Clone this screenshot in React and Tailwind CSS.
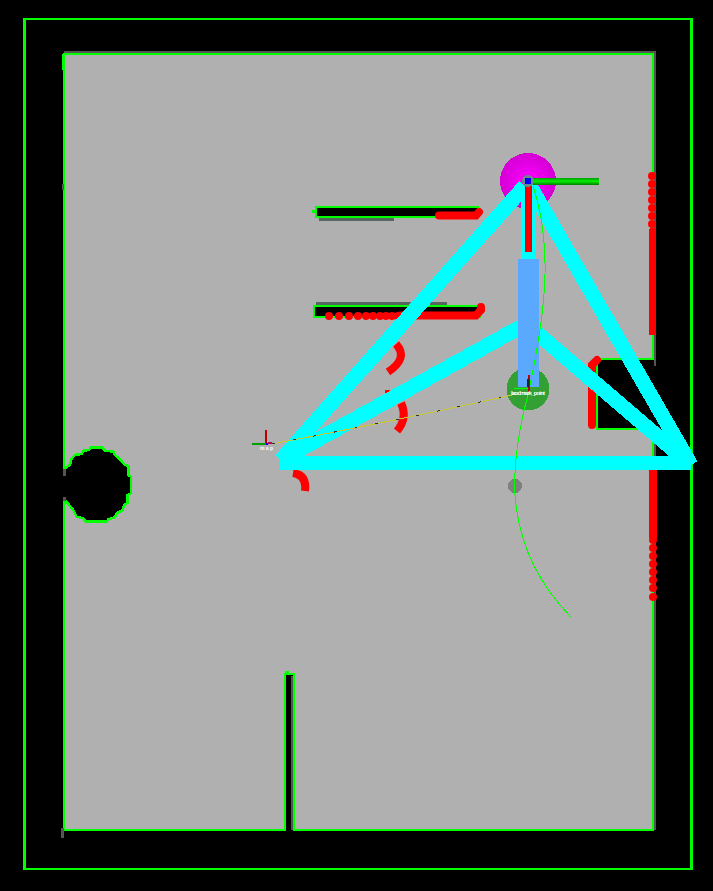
const CIRCLE = [[45,115],[60,105],[65,85],[75,75],[95,72],[100,62],[118,60],[122,53],[158,53],[165,62],[190,65],[195,75],[212,90],[222,103],[235,108],[235,135],[243,140],[243,190],[233,195],[233,218],[222,225],[218,240],[200,250],[195,262],[175,268],[170,275],[108,275],[100,265],[80,260],[70,240],[60,228],[50,215],[42,212]]
  .map(([x, y]) => `${50 + x / 3} ${430 + y / 3}`);

const ROOM = `M64 468 V54 H653 V359 H597 V429 H653 V830 H294 V674 H285 V830 H64 V500 L${CIRCLE.slice().reverse().join(' L')} Z`;

const SLOT_DOTS = [329, 339, 349, 358, 366, 373, 380, 386, 392, 398];
const RIGHT_DOTS_TOP = [176, 184, 192, 200, 208, 216, 224];
const RIGHT_DOTS_BOTTOM = [540, 548, 556, 564, 572, 580, 588, 597];

export default function App() {
  return (
    <div className="w-[713px] h-[891px] bg-black">
      <svg width="713" height="891" viewBox="0 0 713 891" shapeRendering="crispEdges" className="block">
        <defs>
          <radialGradient id="magenta" cx="50%" cy="50%" r="50%">
            <stop offset="0%" stopColor="#ff00ff" />
            <stop offset="100%" stopColor="#d400d4" />
          </radialGradient>
          <linearGradient id="greenBar" x1="0" y1="0" x2="0" y2="1">
            <stop offset="0%" stopColor="#009900" />
            <stop offset="45%" stopColor="#00f000" />
            <stop offset="100%" stopColor="#007f00" />
          </linearGradient>
          <linearGradient id="redBar" x1="0" y1="0" x2="1" y2="0">
            <stop offset="0%" stopColor="#e00000" />
            <stop offset="50%" stopColor="#ff0000" />
            <stop offset="100%" stopColor="#e00000" />
          </linearGradient>
        </defs>

        {/* outer bounds */}
        <rect x="24.500" y="19" width="667" height="850" fill="none" stroke="#00ff00" strokeWidth="2.500" />

        {/* occupancy map */}
        <rect x="64" y="51" width="592" height="2" fill="#555" />
        <rect x="654" y="53" width="2" height="313" fill="#555" />
        <rect x="654" y="430" width="2" height="400" fill="#555" />
        <rect x="291" y="676" width="2" height="154" fill="#555" />
        <path d={ROOM} fill="#b0b0b0" stroke="#00ff00" strokeWidth="2.500" />
        <rect x="62" y="54" width="2" height="16" fill="#00ff00" />
        <rect x="62" y="184" width="2" height="6" fill="#555" />
        <rect x="61" y="828" width="3" height="10" fill="#555" />
        <rect x="63" y="469" width="3" height="7" fill="#555" />
        <rect x="63" y="497" width="3" height="4" fill="#555" />
        <rect x="285" y="671" width="4" height="3" fill="#00ff00" />

        {/* slots */}
        <rect x="319" y="218" width="75" height="3" fill="#556660" />
        <rect x="316" y="207" width="162" height="10" fill="#000" stroke="#00ff00" strokeWidth="2.500" />
        <rect x="312" y="210" width="4" height="3" fill="#00ff00" />
        <rect x="316" y="302" width="131" height="3" fill="#556660" />
        <rect x="314" y="306" width="166" height="11" fill="#000" stroke="#00ff00" strokeWidth="2.500" />

        {/* lidar hits */}
        <g shapeRendering="geometricPrecision" fill="#ff0000">
          {SLOT_DOTS.map((x) => (
            <circle key={x} cx={x} cy="316" r="4" />
          ))}
          {RIGHT_DOTS_TOP.map((y) => (
            <circle key={y} cx="652" cy={y} r="4" />
          ))}
          {RIGHT_DOTS_BOTTOM.map((y) => (
            <circle key={y} cx="653" cy={y} r="4" />
          ))}
        </g>
        <g fill="none" stroke="#ff0000" strokeWidth="8" shapeRendering="geometricPrecision">
          <path d="M439 215.500 H476 L479 212" strokeLinecap="round" />
          <path d="M400 315.500 H476 L481 310 V307" strokeLinecap="round" />
          <path d="M396 344 Q409 358 388 372" />
          <path d="M401 403 Q408 418 397 431" />
          <path d="M293 473 Q307 475 305 491" />
          <path d="M592 425 V365 L597 360" strokeLinecap="round" />
        </g>
        <path d="M385 392 L390 391" fill="none" stroke="#ff0000" strokeWidth="3" />
        <rect x="649" y="228" width="7" height="107" rx="2" fill="#ff0000" />
        <rect x="649" y="468" width="8" height="70" fill="#ff0000" />

        {/* robot goal markers */}
        <circle cx="528" cy="181" r="28" fill="url(#magenta)" />
        <circle cx="528" cy="389" r="21.500" fill="#33a033" />
        <circle cx="515" cy="486" r="7" fill="#808080" />

        {/* footprint */}
        <g fill="none" stroke="#00ffff" strokeWidth="15">
          <path d="M281 460 L525 186" />
          <path d="M281 460 L524 325" />
          <path d="M280 463 H691" strokeWidth="14" />
          <path d="M530 186 L691 465" />
          <path d="M530 327 L691 465" />
          <path d="M528 186 V270" strokeWidth="14" />
        </g>

        {/* link bars */}
        <rect x="518" y="259" width="21" height="128" fill="#5aa9ff" />
        <rect x="525" y="183" width="7" height="69" fill="url(#redBar)" />
        <rect x="532" y="178" width="67" height="7" fill="url(#greenBar)" />
        <circle cx="528" cy="181" r="6" fill="#6a8a8a" />
        <circle cx="528" cy="181" r="3.500" fill="#0000ff" />

        {/* planned path */}
        <path d="M533 186 Q546 225 545 275 Q544 320 528 395 Q513 450 515 495 Q520 565 571 617" fill="none" stroke="#00ff00" strokeWidth="1" />
        <path d="M272 444 Q400 420 526 392" fill="none" stroke="#c8c830" strokeWidth="1" />
        <path d="M272 444 Q400 420 526 392" fill="none" stroke="#333" strokeWidth="1" strokeDasharray="3 18" />

        {/* tf frames */}
        <rect x="265" y="430" width="2" height="14" fill="#c00000" />
        <rect x="252" y="443" width="14" height="2" fill="#00a000" />
        <rect x="266" y="443" width="2" height="2" fill="#0000ff" />
        <rect x="268" y="442" width="4" height="2" fill="#c00060" />
        <text x="260" y="450" fontSize="5" fontWeight="700" fill="#fff" fontFamily="Liberation Sans, sans-serif" textLength="13">map</text>
        <rect x="528" y="375" width="2" height="17" fill="#c00000" />
        <rect x="514" y="388" width="14" height="1" fill="#00ff00" />
        <rect x="527" y="379" width="2" height="8" fill="#222" />
        <text x="511" y="395" fontSize="6" fontWeight="700" fill="#fff" fontFamily="Liberation Sans, sans-serif" textLength="34">landmark_point</text>
      </svg>
    </div>
  );
}
